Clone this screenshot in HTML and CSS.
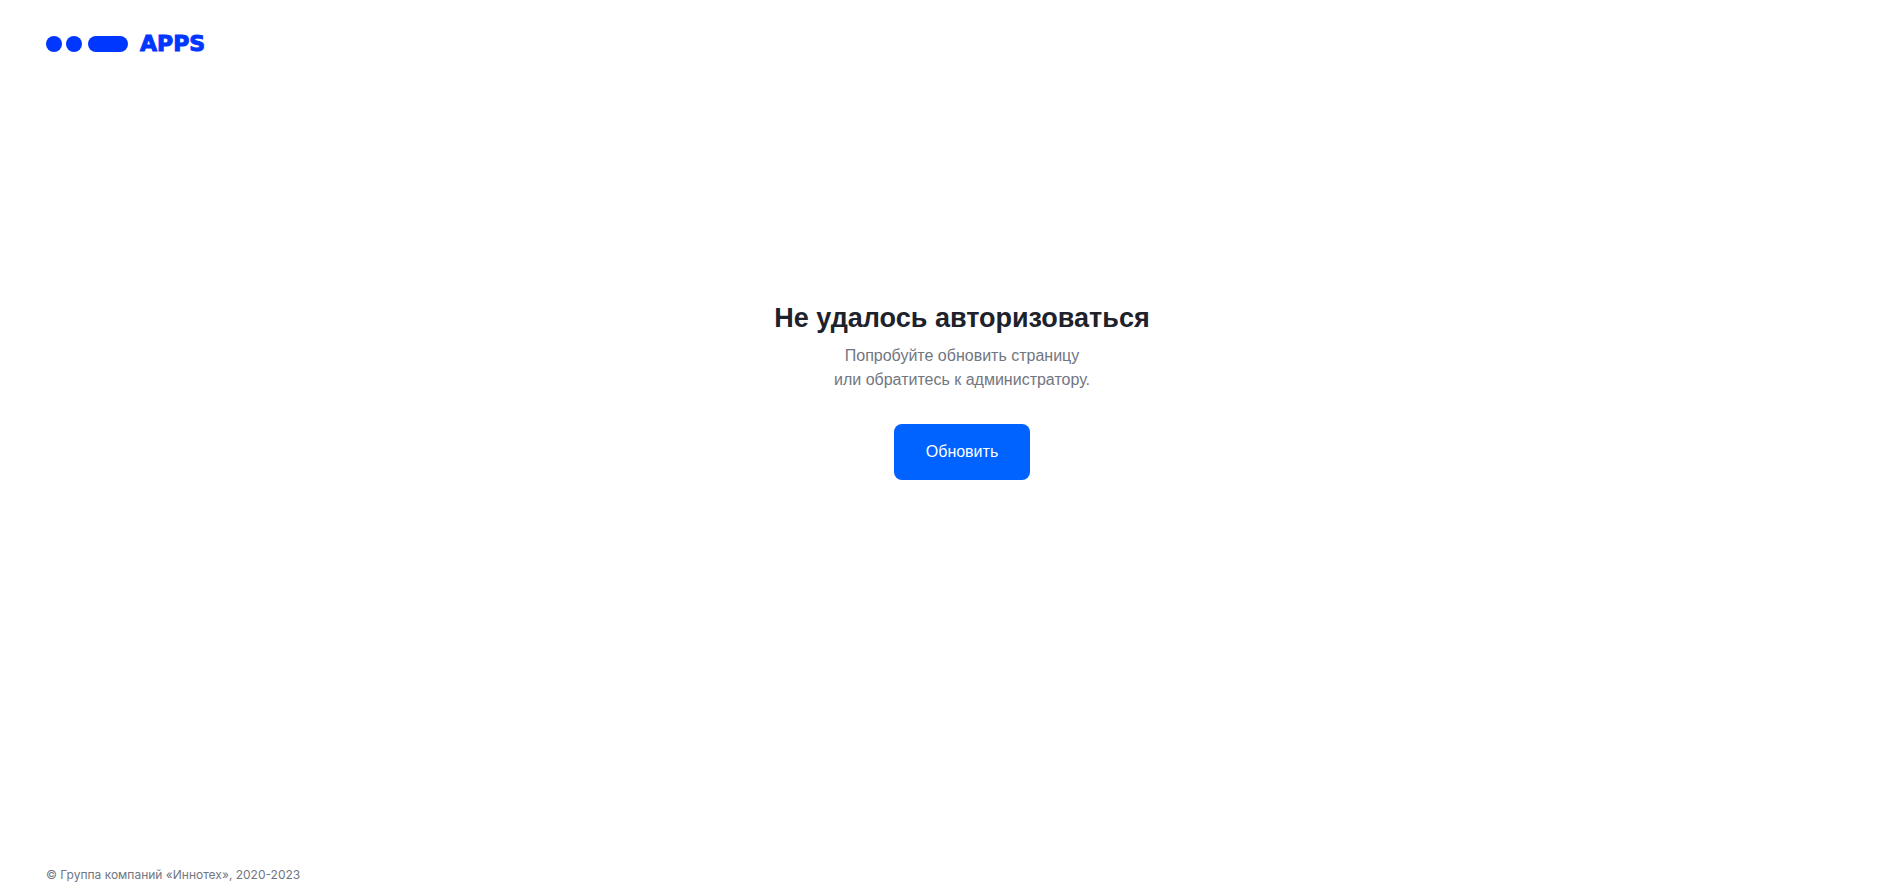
FILE: index.html
```html
<!DOCTYPE html>
<html lang="ru">
  <head>
    <meta charset="UTF-8" />
    <meta
      name="viewport"
      content="width=device-width, initial-scale=1.0"
    />
    <title>Не удалось авторизоваться</title>
    <link rel="stylesheet" href="styles.css">
  </head>
  <body>
    <header class="header">
      <svg class="logo-mark" width="82" height="16" viewBox="0 0 82 16" aria-hidden="true">
        <circle cx="8" cy="8" r="8" />
        <circle cx="28" cy="8" r="8" />
        <rect x="42" width="40" height="16" rx="8" />
      </svg>
      <span class="logo-text">APPS</span>
    </header>

    <main class="content">
      <h1 class="title">Не удалось авторизоваться</h1>
      <p class="subtitle">
        Попробуйте обновить страницу<br />
        или обратитесь к администратору.
      </p>
      <button type="button" class="button">Обновить</button>
    </main>

    <footer class="footer">
      © Группа компаний «Иннотех», 2020-2023
    </footer>
  </body>
</html>
```
FILE: styles.css
```css
* {
  padding: 0;
  margin: 0;
  box-sizing: border-box;
}

body {
  display: flex;
  flex-direction: column;
  min-height: 100vh;
  background-color: #fff;
  font-family: "Liberation Sans", Arial, sans-serif;
}

.header {
  display: flex;
  align-items: center;
  gap: 12px;
  padding: 32px 46px;
}

.logo-mark {
  fill: #0037ff;
}

.logo-text {
  color: #0037ff;
  font-family: "DejaVu Sans", Verdana, sans-serif;
  font-size: 22px;
  font-weight: 900;
  line-height: 24px;
  -webkit-text-stroke: 1px #0037ff;
}

.content {
  display: flex;
  flex: 1;
  flex-direction: column;
  align-items: center;
  justify-content: center;
  padding: 0 0 176px 22px;
  text-align: center;
}

.title {
  margin-bottom: 8px;
  color: #20222b;
  font-size: 27px;
  line-height: 36px;
}

.subtitle {
  margin-bottom: 32px;
  color: #717681;
  font-size: 16px;
  line-height: 24px;
}

.button {
  padding: 16px 32px;
  border: none;
  border-radius: 8px;
  background-color: #0062ff;
  color: #fff;
  font-family: inherit;
  font-size: 16px;
  line-height: 24px;
  cursor: pointer;
}

.footer {
  padding: 0 46px 6px;
  color: #717681;
  font-family: Inter, sans-serif;
  font-size: 12px;
  line-height: 16px;
}
```
